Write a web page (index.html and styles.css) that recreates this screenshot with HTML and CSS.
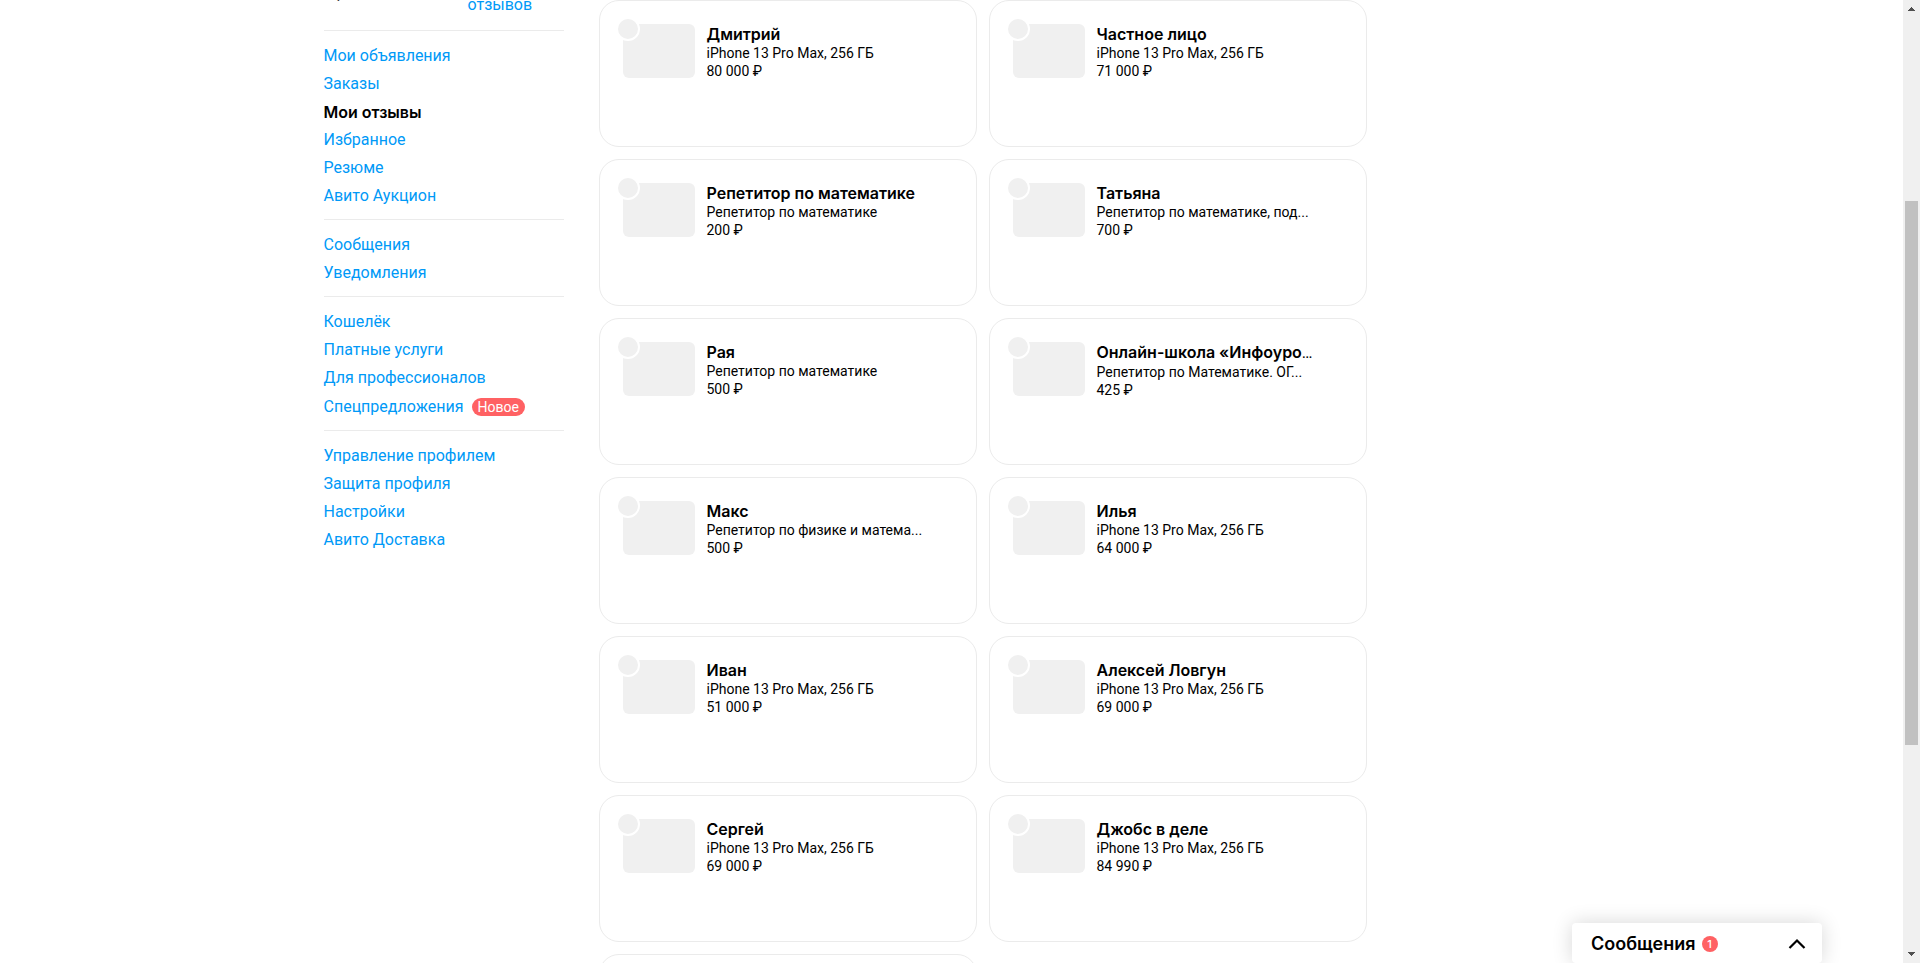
FILE: index.html
```html
<!DOCTYPE html>
<html lang="ru">
<head>
<meta charset="utf-8">
<title>Мои отзывы</title>
<link rel="stylesheet" href="styles.css">
</head>
<body>
<div class="window">
  <div class="viewport">
    <div class="page">
      <aside class="sidebar">
        <div class="summary">
          <span class="summary-score">5,0</span>
          <a class="summary-link" href="#">отзывов</a>
        </div>
        <nav class="nav">
          <ul class="nav-group">
            <li><a href="#">Мои объявления</a></li>
            <li><a href="#">Заказы</a></li>
            <li><a class="current" href="#" aria-current="page">Мои отзывы</a></li>
            <li><a href="#">Избранное</a></li>
            <li><a href="#">Резюме</a></li>
            <li><a href="#">Авито Аукцион</a></li>
          </ul>
          <ul class="nav-group">
            <li><a href="#">Сообщения</a></li>
            <li><a href="#">Уведомления</a></li>
          </ul>
          <ul class="nav-group">
            <li><a href="#">Кошелёк</a></li>
            <li><a href="#">Платные услуги</a></li>
            <li><a href="#">Для профессионалов</a></li>
            <li class="with-badge"><a href="#">Спецпредложения</a><span class="badge">Новое</span></li>
          </ul>
          <ul class="nav-group">
            <li><a href="#">Управление профилем</a></li>
            <li><a href="#">Защита профиля</a></li>
            <li><a href="#">Настройки</a></li>
            <li><a href="#">Авито Доставка</a></li>
          </ul>
        </nav>
      </aside>
      <main class="cards">
        <article class="card"><div class="thumb"><span class="avatar"></span></div><div class="info"><h3>Дмитрий</h3><p>iPhone 13 Pro Max, 256 ГБ</p><p>80 000 ₽</p></div></article>
        <article class="card"><div class="thumb"><span class="avatar"></span></div><div class="info"><h3>Частное лицо</h3><p>iPhone 13 Pro Max, 256 ГБ</p><p>71 000 ₽</p></div></article>
        <article class="card"><div class="thumb"><span class="avatar"></span></div><div class="info"><h3>Репетитор по математике</h3><p>Репетитор по математике</p><p>200 ₽</p></div></article>
        <article class="card"><div class="thumb"><span class="avatar"></span></div><div class="info"><h3>Татьяна</h3><p>Репетитор по математике, под...</p><p>700 ₽</p></div></article>
        <article class="card"><div class="thumb"><span class="avatar"></span></div><div class="info"><h3>Рая</h3><p>Репетитор по математике</p><p>500 ₽</p></div></article>
        <article class="card"><div class="thumb"><span class="avatar"></span></div><div class="info"><h3>Онлайн-школа «Инфоуро<span class="more">…</span></h3><p>Репетитор по Математике. ОГ...</p><p>425 ₽</p></div></article>
        <article class="card"><div class="thumb"><span class="avatar"></span></div><div class="info"><h3>Макс</h3><p>Репетитор по физике и матема...</p><p>500 ₽</p></div></article>
        <article class="card"><div class="thumb"><span class="avatar"></span></div><div class="info"><h3>Илья</h3><p>iPhone 13 Pro Max, 256 ГБ</p><p>64 000 ₽</p></div></article>
        <article class="card"><div class="thumb"><span class="avatar"></span></div><div class="info"><h3>Иван</h3><p>iPhone 13 Pro Max, 256 ГБ</p><p>51 000 ₽</p></div></article>
        <article class="card"><div class="thumb"><span class="avatar"></span></div><div class="info"><h3>Алексей Ловгун</h3><p>iPhone 13 Pro Max, 256 ГБ</p><p>69 000 ₽</p></div></article>
        <article class="card"><div class="thumb"><span class="avatar"></span></div><div class="info"><h3>Сергей</h3><p>iPhone 13 Pro Max, 256 ГБ</p><p>69 000 ₽</p></div></article>
        <article class="card"><div class="thumb"><span class="avatar"></span></div><div class="info"><h3>Джобс в деле</h3><p>iPhone 13 Pro Max, 256 ГБ</p><p>84 990 ₽</p></div></article>
        <article class="card"></article>
      </main>
    </div>
    <button class="messenger" type="button" aria-expanded="false">
      <span class="messenger-title">Сообщения</span>
      <span class="messenger-count">1</span>
      <svg class="chevron" viewBox="0 0 18 12" width="18" height="12" aria-hidden="true"><path d="M1.5 10 9 2.5 16.5 10" fill="none" stroke="#000" stroke-width="2.2"/></svg>
    </button>
  </div>
  <div class="scrollbar" aria-hidden="true">
    <svg class="arrow" viewBox="0 0 17 17" width="17" height="17"><path d="M5 11h7v-1h-1V9h-1V8H9V7H8v1H7v1H6v1H5z" fill="#505050"/></svg>
    <div class="track"><div class="knob"></div></div>
    <svg class="arrow" viewBox="0 0 17 17" width="17" height="17"><path d="M5 6h7v1h-1v1h-1v1H9v1H8V9H7V8H6V7H5z" fill="#505050"/></svg>
  </div>
</div>
</body>
</html>
```
FILE: styles.css
```css
* { box-sizing: border-box; }

body {
  margin: 0;
  background: #fff;
  color: #000;
  font: 16px/28px Roboto, "Open Sans", sans-serif;
}

a { color: #0099f7; text-decoration: none; }
h3, p, ul { margin: 0; padding: 0; font-weight: 400; }

.window { display: flex; height: 100vh; overflow: hidden; }
.viewport { position: relative; flex: 1; min-width: 0; overflow: hidden; }

.page {
  display: grid;
  grid-template-columns: 240px minmax(0, 1fr);
  gap: 35px;
  align-items: start;
  max-width: 1256px;
  margin: 0 auto;
  padding-right: 213px;
}

/* Sidebar */
.sidebar { margin-top: -25px; }
.summary { display: flex; height: 40px; margin-bottom: 15px; }
.summary-score { flex: 0 0 144px; font-size: 24px; line-height: 30px; }
.summary-link { align-self: flex-end; line-height: 20px; }

.nav-group {
  list-style: none;
  border-top: 1px solid #ebebeb;
  padding: 11px 0 9px;
}
.nav-group a { display: block; }
.nav-group .current { color: #000; font-family: Inter, sans-serif; font-weight: 600; }
.with-badge { display: flex; align-items: flex-end; gap: 8px; min-height: 29px; }
.badge {
  margin-bottom: 5px;
  padding: 0 6px;
  border-radius: 9px;
  background: #ff6163;
  color: #fff;
  font-size: 14px;
  line-height: 18px;
}

/* Review cards */
.cards { display: grid; grid-template-columns: 1fr 1fr; gap: 12px; }
.card {
  display: flex;
  gap: 12px;
  min-height: 147px;
  padding: 23px;
  border: 1px solid #ebebeb;
  border-radius: 20px;
}
.thumb {
  position: relative;
  flex: 0 0 72px;
  height: 54px;
  border-radius: 6px;
  background: #f0f0f0;
}
.avatar {
  position: absolute;
  top: -7px;
  left: -7px;
  width: 24px;
  height: 24px;
  border: 2px solid #fff;
  border-radius: 50%;
  background: #f0f0f0;
}
.info { min-width: 0; white-space: nowrap; font-size: 14px; line-height: 18px; }
.info h3 { font: 600 16px/20px Inter, sans-serif; }
.info .more { font-family: Roboto, sans-serif; font-weight: 400; }

/* Messages panel pinned to the bottom edge */
.messenger {
  position: absolute;
  right: 81px;
  bottom: 0;
  display: flex;
  align-items: center;
  gap: 6px;
  width: 250px;
  height: 40px;
  padding: 1px 16px 0 19px;
  border: 0;
  border-radius: 4px;
  background: #fff;
  box-shadow: 0 0 20px rgba(0, 0, 0, .16);
  color: #000;
  font: 600 18px/24px Inter, sans-serif;
}
.messenger-count {
  width: 16px;
  border-radius: 8px;
  background: #ff6163;
  color: #fff;
  font-size: 11px;
  font-weight: 500;
  line-height: 16px;
  text-align: center;
}
.chevron { margin-left: auto; }

/* Scrollbar */
.scrollbar { display: flex; flex-direction: column; flex: 0 0 17px; background: #f0f0f0; }
.arrow { flex: none; }
.track { flex: 1; padding: 0 2px; }
.knob { height: 544px; margin-top: 184px; background: #c1c1c1; }
```
